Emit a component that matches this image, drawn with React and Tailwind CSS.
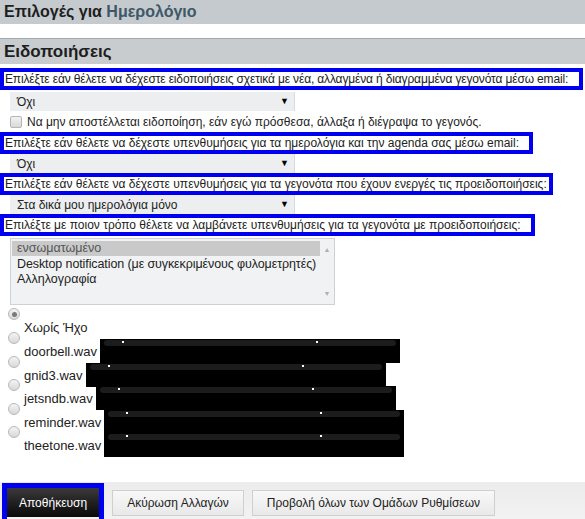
import React from 'react';

const font = { fontFamily: '"Liberation Sans", Arial, sans-serif' };

function BlueBox({ width, children }) {
    return (
        <div className={`border-[4px] border-[#0000f0] px-[1px] h-[22px] text-[12px] leading-[14px] text-[#222] whitespace-nowrap overflow-hidden ${width}`}>
            {children}
        </div>
    );
}

function FakeSelect({ children }) {
    return (
        <div className="ml-[10px] w-[285px] h-[19px] bg-[#eceeef] border-r border-[#d9dcde] flex items-center justify-between pl-[7px] pr-[5px] text-[12px] text-[#222]">
            <span>{children}</span>
            <span className="text-[9px] text-black">▼</span>
        </div>
    );
}

function Player() {
    return (
        <div className="ml-[3px] mt-[7px] w-[300px] h-[24px] bg-black shrink-0 pt-[1px] px-[4px]">
            <div className="h-[6px] rounded-full bg-[#1c1c1c] relative">
                <span className="absolute left-[18px] top-[1px] w-[2px] h-[2px] bg-white" />
                <span className="absolute left-[212px] top-[1px] w-[2px] h-[2px] bg-white" />
            </div>
        </div>
    );
}

function Radio({ checked }) {
    return (
        <span className="w-[12px] h-[12px] rounded-full border border-[#b8b8b8] bg-gradient-to-b from-[#f4f4f4] to-[#d8d8d8] flex items-center justify-center shrink-0 ml-[8px]">
            {checked && <span className="w-[5px] h-[5px] rounded-full bg-[#7a7a7a]" />}
        </span>
    );
}

export default function App() {
    const sounds = ['doorbell.wav', 'gnid3.wav', 'jetsndb.wav', 'reminder.wav', 'theetone.wav'];

    return (
        <div className="w-[585px] h-[519px] bg-white overflow-hidden flex flex-col" style={font}>
            <div className="h-[24px] bg-[#c4cacd] flex items-center pl-[4px] text-[16px] font-bold text-[#1e1e1e]">
                Επιλογές για&nbsp;<span className="text-[#3e5868]">Ημερολόγιο</span>
            </div>

            <div className="mt-[14px] h-[26px] bg-[#c8ccce] border-t border-[#a4a9ac] flex items-center pl-[4px] text-[17px] font-bold text-[#1e1e1e]">
                Ειδοποιήσεις
            </div>

            <div className="mt-[4px] flex flex-col">
                <BlueBox width="w-[583px] tracking-[-0.15px]">
                    Επιλέξτε εάν θέλετε να δέχεστε ειδοποιήσεις σχετικά με νέα, αλλαγμένα ή διαγραμμένα γεγονότα μέσω email:
                </BlueBox>
                <div className="mt-[2px]">
                    <FakeSelect>Όχι</FakeSelect>
                </div>
                <div className="flex items-center h-[20px] mt-[1px] pl-[10px] text-[12px] text-[#222]">
                    <span className="w-[12px] h-[12px] border border-[#b5b5b5] bg-gradient-to-b from-[#f2f2f2] to-[#d9d9d9] rounded-[2px] mr-[5px]" />
                    Να μην αποστέλλεται ειδοποίηση, εάν εγώ πρόσθεσα, άλλαξα ή διέγραψα το γεγονός.
                </div>
                <BlueBox width="w-[533px]">
                    Επιλέξτε εάν θέλετε να δέχεστε υπενθυμήσεις για τα ημερολόγια και την agenda σας μέσω email:
                </BlueBox>
                <FakeSelect>Όχι</FakeSelect>
                <BlueBox width="w-[553px]">
                    Επιλέξτε εάν θέλετε να δέχεστε υπενθυμήσεις για τα γεγονότα που έχουν ενεργές τις προειδοποιήσεις:
                </BlueBox>
                <FakeSelect>Στα δικά μου ημερολόγια μόνο</FakeSelect>
                <BlueBox width="w-[535px]">
                    Επιλέξτε με ποιον τρόπο θέλετε να λαμβάνετε υπενθυμήσεις για τα γεγονότα με προειδοποιήσεις:
                </BlueBox>

                <div className="ml-[10px] mt-[2px] w-[325px] h-[67px] border border-[#cfd2d4] bg-[#f1f2f3] flex text-[12.5px] leading-[15px] whitespace-nowrap">
                    <div className="flex-1 pt-[2px] pl-[1px]">
                        <div className="bg-[#c9c9c9] text-[#555] pl-[5px] h-[15px]">ενσωματωμένο</div>
                        <div className="text-[#222] pl-[5px] mt-[1px] tracking-[-0.1px]">Desktop notification (με συγκεκριμένους φυλομετρητές)</div>
                        <div className="text-[#222] pl-[5px]">Αλληλογραφία</div>
                    </div>
                    <div className="w-[14px] flex flex-col justify-between items-center py-[3px] text-[7px] text-[#b0b0b0]">
                        <span>▲</span>
                        <span>▼</span>
                    </div>
                </div>

                <div className="mt-[3px] flex flex-col text-[13px] leading-[14px] text-[#222]">
                    <div className="flex items-start h-[24px]">
                        <Radio checked />
                        <span className="mt-[13px] ml-[4px]">Χωρίς Ήχο</span>
                    </div>
                    {sounds.map((s) => (
                        <div key={s} className="flex items-start h-[23.5px]">
                            <Radio />
                            <span className="mt-[13px] ml-[4px]">{s}</span>
                            <Player />
                        </div>
                    ))}
                </div>
            </div>

            <div className="mt-auto h-[37px] bg-gradient-to-b from-[#ececec] to-[#f2f2f2] flex items-end pl-[2px] gap-[8px] text-[12px]">
                <div className="h-[36px] border-[5px] border-[#0000f0] border-b-0 pb-[2px] flex">
                    <div className="h-full px-[12px] bg-gradient-to-b from-[#3a3a3a] to-[#0a0a0a] text-white flex items-center">
                        Αποθήκευση
                    </div>
                </div>
                <div className="mb-[3px] h-[26px] px-[14px] border border-[#cfcfcf] bg-gradient-to-b from-[#f8f8f8] to-[#e9e9e9] text-[#222] flex items-center">
                    Ακύρωση Αλλαγών
                </div>
                <div className="mb-[3px] h-[26px] px-[14px] border border-[#cfcfcf] bg-gradient-to-b from-[#f8f8f8] to-[#e9e9e9] text-[#222] flex items-center">
                    Προβολή όλων των Ομάδων Ρυθμίσεων
                </div>
            </div>
        </div>
    );
}
